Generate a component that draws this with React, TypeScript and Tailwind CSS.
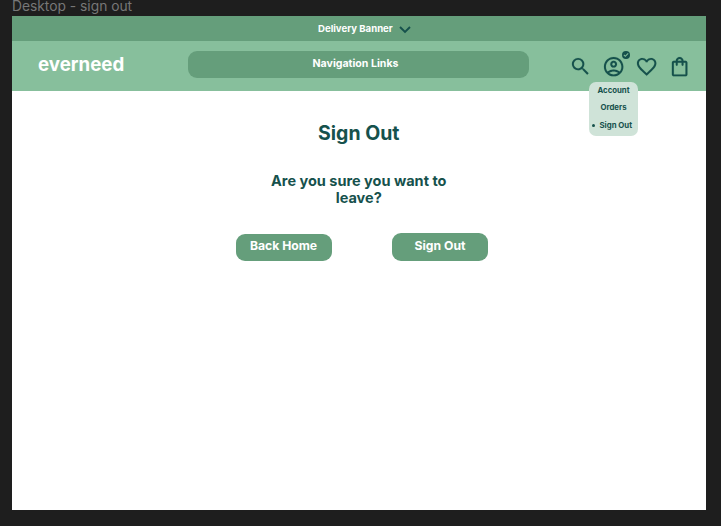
function Icon({ d, className }: { d: string; className: string }) {
  return (
    <svg viewBox="0 0 24 24" fill="currentColor" stroke="currentColor" strokeWidth="0.12" className={`shrink-0 ${className}`}>
      <path d={d} />
    </svg>
  );
}

const SEARCH =
  "M15.5 14h-.79l-.28-.27A6.471 6.471 0 0 0 16 9.5 6.5 6.5 0 1 0 9.5 16c1.61 0 3.09-.59 4.23-1.57l.27.28v.79l5 4.99L20.49 19l-4.99-5zm-6 0C7.01 14 5 11.99 5 9.5S7.01 5 9.5 5 14 7.01 14 9.5 11.99 14 9.5 14z";
const ACCOUNT =
  "M12 2C6.48 2 2 6.48 2 12s4.48 10 10 10 10-4.48 10-10S17.52 2 12 2zM7.35 18.5C8.66 17.56 10.26 17 12 17s3.34.56 4.65 1.5C15.34 19.44 13.74 20 12 20s-3.34-.56-4.65-1.5zm10.79-1.38C16.45 15.8 14.32 15 12 15s-4.45.8-6.14 2.12C4.7 15.73 4 13.95 4 12c0-4.42 3.58-8 8-8s8 3.58 8 8c0 1.95-.7 3.73-1.86 5.12zM12 6c-1.93 0-3.5 1.57-3.5 3.5S10.07 13 12 13s3.5-1.57 3.5-3.5S13.93 6 12 6zm0 5c-.83 0-1.5-.67-1.5-1.5S11.17 8 12 8s1.5.67 1.5 1.5S12.83 11 12 11z";
const HEART =
  "M16.5 3c-1.74 0-3.41.81-4.5 2.09C10.91 3.81 9.24 3 7.5 3 4.42 3 2 5.42 2 8.5c0 3.78 3.4 6.86 8.55 11.54L12 21.35l1.45-1.32C18.6 15.36 22 12.28 22 8.5 22 5.42 19.58 3 16.5 3zm-4.4 15.55-.1.1-.1-.1C7.14 14.24 4 11.39 4 8.5 4 6.5 5.5 5 7.5 5c1.54 0 3.04.99 3.57 2.36h1.87C13.46 5.99 14.96 5 16.5 5c2 0 3.5 1.5 3.5 3.5 0 2.89-3.14 5.74-7.9 10.05z";
const BAG =
  "M18 6h-2c0-2.21-1.79-4-4-4S8 3.79 8 6H6c-1.1 0-2 .9-2 2v12c0 1.1.9 2 2 2h12c1.1 0 2-.9 2-2V8c0-1.1-.9-2-2-2zm-6-2c1.1 0 2 .9 2 2h-4c0-1.1.9-2 2-2zm6 16H6V8h2v2c0 .55.45 1 1 1s1-.45 1-1V8h4v2c0 .55.45 1 1 1s1-.45 1-1V8h2v12z";
const CHECK =
  "M12 0a12 12 0 1 0 0 24 12 12 0 0 0 0-24zm-2 18-5.5-5.5 2.2-2.2L10 13.6l7.5-7.5 2.2 2.2z";

function AccountMenu() {
  return (
    <div className="absolute left-[-13px] top-[27px] flex h-[54px] w-[49px] flex-col items-center rounded-[7px] bg-[#cfe3d8] pt-[3px] text-[7.8px] font-bold leading-[11px]">
      <span>Account</span>
      <span className="mt-[6px]">Orders</span>
      <span className="mt-[7px] flex items-center gap-[5px] self-start pl-[3px]">
        <i className="size-[2.5px] rounded-full bg-[#16514c]" />
        <span className="whitespace-nowrap">Sign Out</span>
      </span>
    </div>
  );
}

export default function App() {
  return (
    <div className="h-[526px] w-[721px] overflow-hidden bg-[#1e1e1e] pl-3 font-['Inter',sans-serif] text-[#16514c]">
      <p className="h-4 whitespace-nowrap text-[13.8px] leading-[12px] text-[#777777]">Desktop - sign out</p>
      <div className="h-[494px] w-[693.5px] bg-white">
        <div className="flex h-[25.4px] items-center bg-[#659e7b] pl-[306px] text-[9.6px] font-bold text-white">
          <span className="w-[75px] whitespace-nowrap">Delivery Banner</span>
          <svg viewBox="0 0 12 8" fill="none" stroke="#16514c" strokeWidth="1.9" className="ml-[5.5px] mt-[3px] h-2 w-3">
            <path d="M1 1l5 5 5-5" />
          </svg>
        </div>
        <header className="flex h-[49.8px] bg-[#87bf9c]">
          <h2 className="ml-[26px] mt-[11px] w-[150px] text-[18.7px] font-bold leading-[26px] text-white">everneed</h2>
          <nav className="mt-[9.6px] h-[27px] w-[341px] rounded-[9px] bg-[#659e7b] pr-[6px] text-center text-[10.6px] font-bold leading-[25px] text-white">
            Navigation Links
          </nav>
          <div className="ml-[40px] mt-[13.6px] flex gap-[10px]">
            <Icon d={SEARCH} className="size-[23px]" />
            <div className="relative size-[23.3px]">
              <Icon d={ACCOUNT} className="size-[23.3px]" />
              <Icon d={CHECK} className="absolute left-[19.5px] top-[-4px] size-2" />
              <AccountMenu />
            </div>
            <Icon d={HEART} className="size-[23.3px]" />
            <Icon d={BAG} className="-ml-[0.8px] size-[23.3px]" />
          </div>
        </header>
        <main className="flex flex-col items-center font-bold">
          <h1 className="mt-[28.5px] text-[19.5px] leading-[26px]">Sign Out</h1>
          <p className="mt-[26px] w-[200px] text-center text-[14.5px] leading-[17.5px]">Are you sure you want to leave?</p>
          <div className="mt-[26.7px] flex gap-[60.5px] pl-[6px] text-[12.2px] text-white">
            <button className="mt-[0.5px] h-[27.5px] w-24 rounded-[9px] bg-[#659e7b] pb-[2px]">Back Home</button>
            <button className="h-[27.5px] w-24 rounded-[9px] bg-[#659e7b] pb-[2px]">Sign Out</button>
          </div>
        </main>
      </div>
    </div>
  );
}
